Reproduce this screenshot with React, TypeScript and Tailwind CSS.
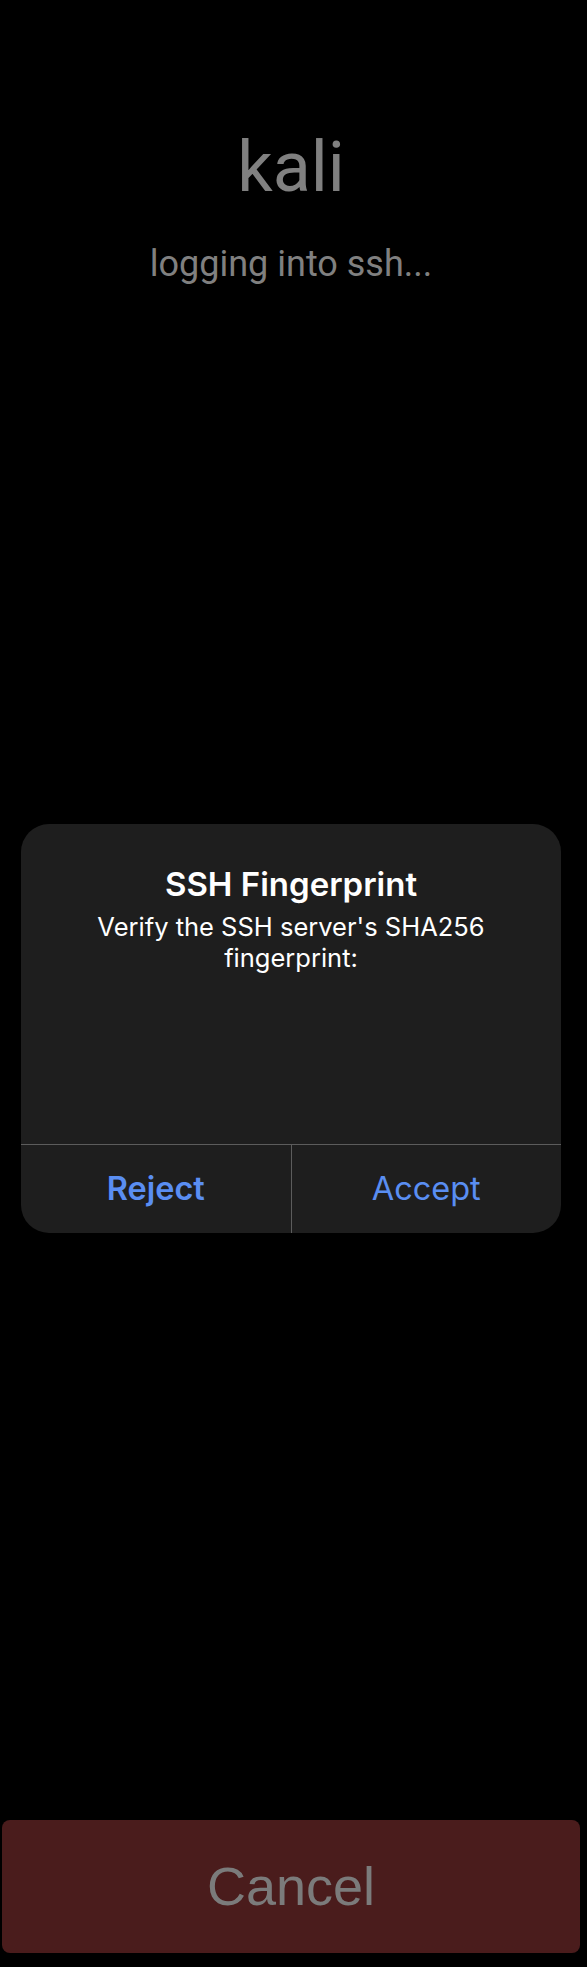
const App = () => {
  return (
    <div className="min-h-[1967px] w-full bg-black">
      <div className="flex h-[1967px] w-[582px] flex-col items-center">
        <h1 className="mt-[132px] text-[70px] leading-[70px] text-[#808080] font-['Roboto',sans-serif]">
          kali
        </h1>
        <p className="mt-[44px] text-[36px] leading-[36px] text-[#808080] font-['Roboto',sans-serif]">
          logging into ssh...
        </p>

        <div className="mt-[542px] w-[540px] overflow-hidden rounded-[28px] bg-[#1e1e1e] font-['Inter',sans-serif]">
          <div className="flex h-[320px] flex-col items-center px-8 pt-[40px] text-center">
            <h2 className="text-[33px] leading-[40px] font-semibold text-white">
              SSH Fingerprint
            </h2>
            <p className="mt-[7px] text-[25.5px] leading-[31px] text-white">
              Verify the SSH server's SHA256
              <br />
              fingerprint:
            </p>
          </div>
          <div className="flex h-[89px] border-t border-[#5c5c5c]">
            <button className="flex flex-1 items-center justify-center text-[32.5px] font-semibold text-[#5a8ef2]">
              Reject
            </button>
            <div className="w-px bg-[#5c5c5c]" />
            <button className="flex flex-1 items-center justify-center text-[32.5px] text-[#5a8ef2]">
              Accept
            </button>
          </div>
        </div>

        <button className="mt-auto mb-[14px] flex h-[133px] w-[578px] items-center justify-center rounded-[8px] bg-[#4a1c1c] text-[54px] text-[#7b7b7b] font-['Liberation_Sans',Arial,sans-serif]">
          Cancel
        </button>
      </div>
    </div>
  );
};

export default App;
